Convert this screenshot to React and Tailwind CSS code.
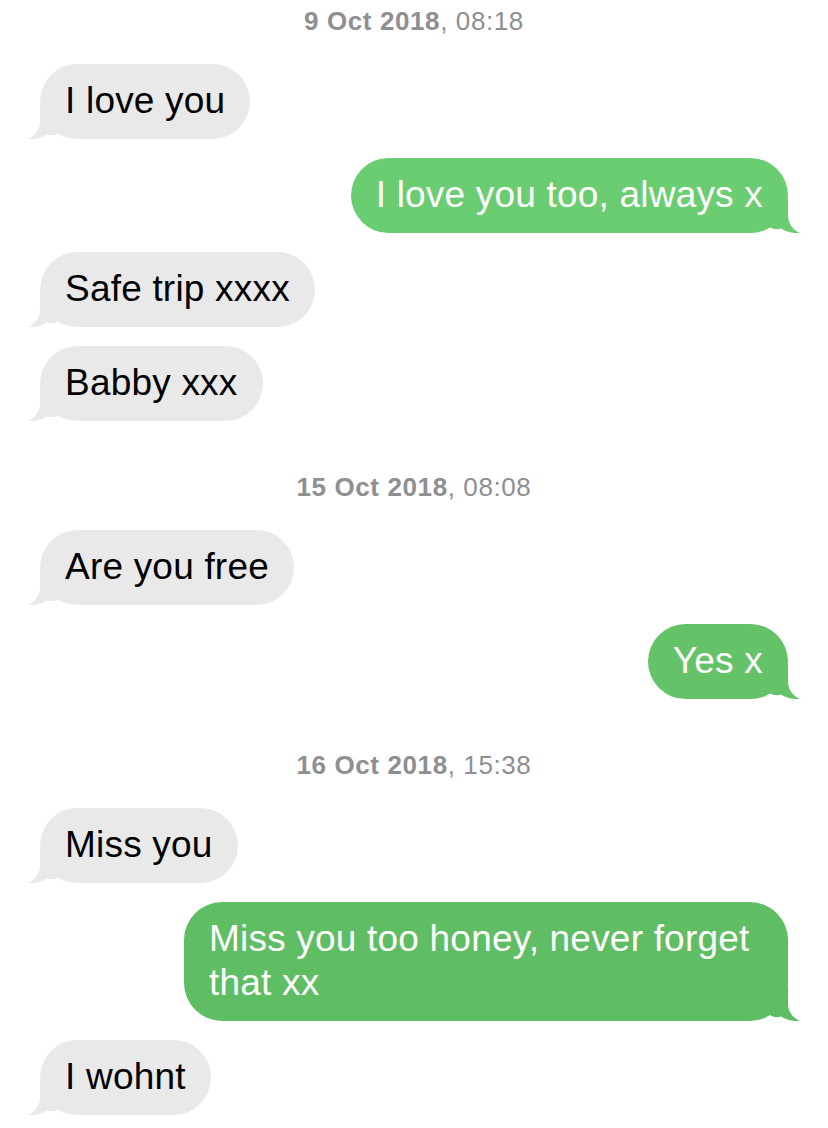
import React from 'react';

// tail shape: bubble edge sits at x=12, bubble bottom at y=34
const TAIL = 'M12,0 L12,16 C12,25 7,31 0,34 C8,34.5 14,32.5 19,29.5 C23,31 27,30 30,28.3 L30,0 Z';

const groups = [
  {
    date: '9 Oct 2018',
    time: '08:18',
    messages: [
      { text: 'I love you' },
      { text: 'I love you too, always x', me: true, bg: 'bg-[#6acd71]', fill: 'fill-[#6acd71]' },
      { text: 'Safe trip xxxx' },
      { text: 'Babby xxx' },
    ],
  },
  {
    date: '15 Oct 2018',
    time: '08:08',
    messages: [
      { text: 'Are you free' },
      { text: 'Yes x', me: true, bg: 'bg-[#64c268]', fill: 'fill-[#64c268]' },
    ],
  },
  {
    date: '16 Oct 2018',
    time: '15:38',
    messages: [
      { text: 'Miss you' },
      { text: 'Miss you too honey, never forget that xx', me: true, bg: 'bg-[#5fbd64]', fill: 'fill-[#5fbd64]' },
      { text: 'I wohnt' },
    ],
  },
];

function Stamp({ date, time }) {
  return (
    <div className="h-[32px] text-center text-[26px] leading-[32px] tracking-[0.6px] text-[#8e8e93]">
      <span className="font-bold">{date}</span>, {time}
    </div>
  );
}

function Bubble({ text, me, bg, fill }) {
  return (
    <div className={me ? 'flex justify-end' : 'flex justify-start'}>
      <div
        className={`relative max-w-[604px] rounded-[38px] px-[25px] pt-[15px] pb-[16px] text-[37px] leading-[44px] tracking-[0.2px] ${
          me ? `${bg} text-white` : 'bg-[#e9e9ea] text-black'
        }`}
      >
        <svg
          viewBox="0 0 30 34"
          className={`absolute bottom-0 h-[34px] w-[30px] ${me ? '-right-[12px] -scale-x-100' : '-left-[12px]'}`}
        >
          <path d={TAIL} className={me ? fill : 'fill-[#e9e9ea]'} />
        </svg>
        <span className="relative">{text}</span>
      </div>
    </div>
  );
}

export default function App() {
  return (
    <div className="min-h-[1128px] bg-white px-[40px] pt-[5px] font-['Liberation_Sans',Arial,sans-serif]">
      {groups.map((g, i) => (
        <div key={g.date} className={i > 0 ? 'mt-[50px]' : ''}>
          <Stamp date={g.date} time={g.time} />
          <div className="mt-[27px] flex flex-col gap-[19px]">
            {g.messages.map((m, j) => (
              <Bubble key={j} {...m} />
            ))}
          </div>
        </div>
      ))}
    </div>
  );
}
